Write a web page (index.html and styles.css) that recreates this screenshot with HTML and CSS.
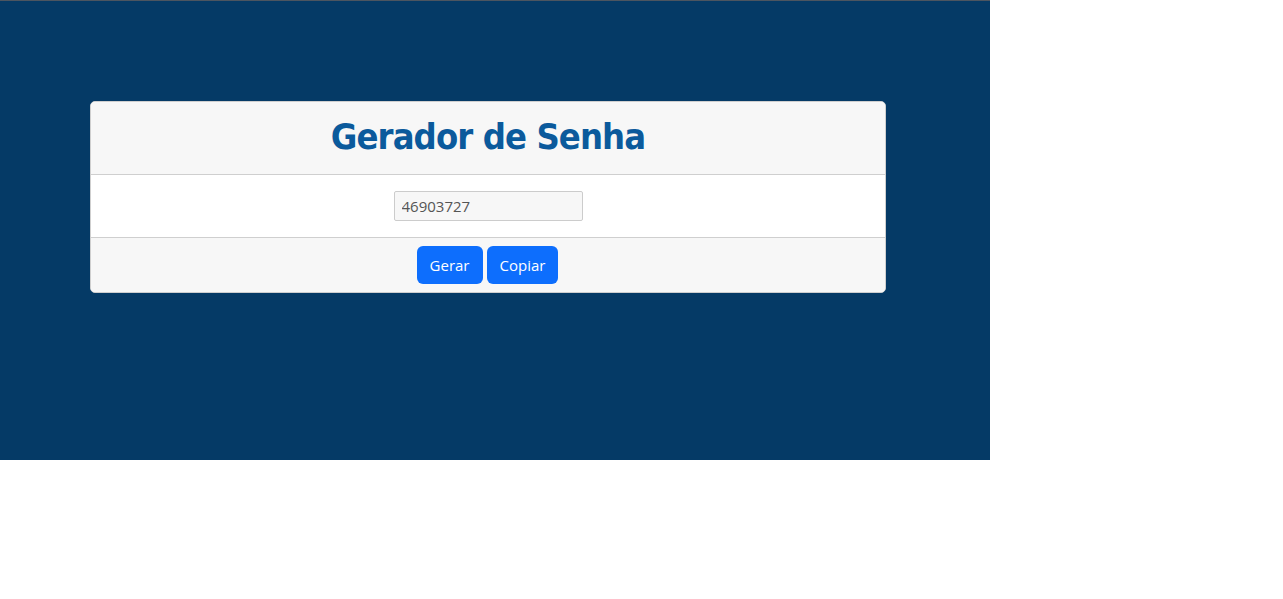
FILE: index.html
```html
<!DOCTYPE html>
<html lang="pt-BR">
<head>
<meta charset="utf-8">
<title>Gerador de Senha</title>
<link rel="stylesheet" href="styles.css">
</head>
<body>
<main class="panel">
  <section class="card">
    <header class="card-header">
      <h1 class="title">Gerador de Senha</h1>
    </header>
    <div class="card-body">
      <input class="pw" type="text" value="46903727" readonly>
    </div>
    <footer class="card-footer">
      <button class="btn">Gerar</button>
      <button class="btn">Copiar</button>
    </footer>
  </section>
</main>
</body>
</html>
```
FILE: styles.css
```css
html, body { margin: 0; padding: 0; background: #fff; }
body { font-family: "Open Sans", "Noto Sans", sans-serif; }
.panel {
  width: 990px;
  height: 460px;
  box-sizing: border-box;
  background: #053a66;
  border-top: 1px solid #4d5560;
  padding: 100px 0 0 90px;
}
.card {
  width: 796px;
  box-sizing: border-box;
  border: 1px solid #cfcfcf;
  border-radius: 5px;
  background: #fff;
  overflow: hidden;
}
.card-header {
  height: 68px;
  padding-bottom: 4px;
  background: #f7f7f7;
  border-bottom: 1px solid #cfcfcf;
  display: flex;
  align-items: center;
  justify-content: center;
}
.title {
  margin: 0;
  font-family: "DejaVu Sans Condensed", "DejaVu Sans", sans-serif;
  font-stretch: condensed;
  font-weight: 700;
  font-size: 36px;
  color: #0b5a9c;
  letter-spacing: -0.9px;
}
.card-body {
  height: 62px;
  display: flex;
  align-items: center;
  justify-content: center;
  border-bottom: 1px solid #cfcfcf;
}
.pw {
  width: 189px;
  height: 30px;
  box-sizing: border-box;
  border: 1px solid #cccccc;
  border-radius: 2px;
  background: #f7f7f7;
  color: #555;
  font-family: "Open Sans", "Noto Sans", sans-serif;
  font-size: 15px;
  padding: 0 7px;
  margin: 0;
  outline: none;
}
.card-footer {
  height: 54px;
  background: #f7f7f7;
  display: flex;
  align-items: center;
  justify-content: center;
  gap: 4px;
  padding-right: 1px;
}
.btn {
  height: 38px;
  padding: 0 13px;
  border: none;
  border-radius: 6px;
  background: #0d6efd;
  color: #fff;
  font-family: "Open Sans", "Noto Sans", sans-serif;
  font-size: 15px;
}
```
